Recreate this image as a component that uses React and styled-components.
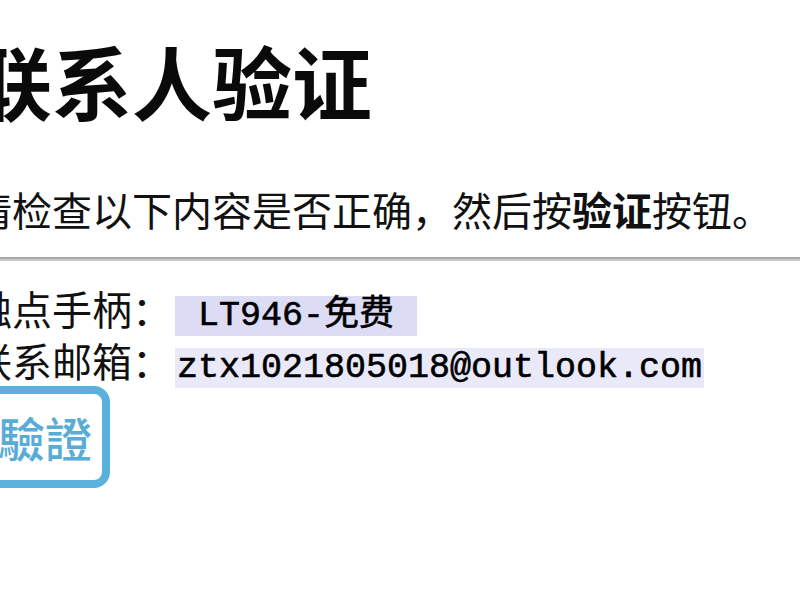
import React from "react";
import styled, { createGlobalStyle } from "styled-components";

const GlobalStyle = createGlobalStyle`
  html, body {
    margin: 0;
    padding: 0;
    background: #ffffff;
    overflow: hidden;
  }
  body {
    font-family: "Noto Sans CJK SC", "Noto Sans", sans-serif;
    color: #111111;
  }
`;

const Page = styled.div`
  width: 860px;
  margin-left: -28px;
  padding-top: 31px;
`;

const Title = styled.h1`
  margin: 0;
  font-size: 80px;
  line-height: 96px;
  font-weight: 700;
  color: #0a0a0a;
  white-space: nowrap;
`;

const Intro = styled.p`
  margin: 58px 0 0;
  font-size: 40px;
  line-height: 48px;
  white-space: nowrap;

  b {
    font-weight: 700;
  }
`;

const Rule = styled.hr`
  margin: 24px 0 0;
  border: 0;
  border-top: 2px solid #a8a8a8;
  border-bottom: 2px solid #c8c8c8;
  height: 0;
`;

const Fields = styled.div`
  margin-top: 21px;
  display: flex;
  flex-direction: column;
`;

const Row = styled.div`
  font-size: 40px;
  line-height: 52px;
  height: 52px;
  white-space: nowrap;
`;

const Code = styled.code`
  font-family: "Liberation Mono", "Noto Sans CJK SC", monospace;
  font-size: 35px;
  line-height: 1;
  font-weight: 400;
  margin-left: 3px;
  padding: 0 2px;
  background: ${({ $strong }) => ($strong ? "#dcdcf5" : "#e9e9f9")};
  color: #000000;
  -webkit-text-stroke: 0.6px #000000;
`;

const VerifyButton = styled.button`
  margin-top: 0;
  margin-left: -4px;
  font-family: "Noto Sans CJK TC", "Noto Sans CJK SC", sans-serif;
  font-size: 47px;
  line-height: 53px;
  font-weight: 500;
  color: #58acd6;
  background: #ffffff;
  border: 8px solid #5ab2dc;
  border-radius: 16px;
  padding: 16px 10px 17px 22px;
  cursor: pointer;
`;

export default function App() {
  return (
    <>
      <GlobalStyle />
      <Page>
        <Title>联系人验证</Title>
        <Intro>
          请检查以下内容是否正确，然后按<b>验证</b>按钮。
        </Intro>
        <Rule />
        <Fields>
          <Row>
            触点手柄：<Code $strong>{"\u00a0LT946-免费\u00a0"}</Code>
          </Row>
          <Row>
            联系邮箱：<Code>ztx1021805018@outlook.com</Code>
          </Row>
        </Fields>
        <div>
          <VerifyButton>驗證</VerifyButton>
        </div>
      </Page>
    </>
  );
}
